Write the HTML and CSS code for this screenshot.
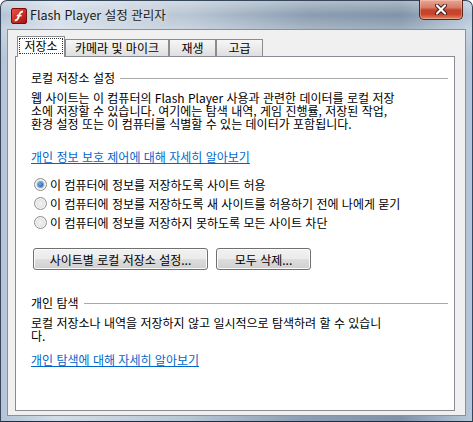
FILE: index.html
```html
<!DOCTYPE html>
<html lang="ko">
<head>
    <meta charset="UTF-8">
    <meta name="viewport" content="width=device-width, initial-scale=1.0">
    <title>Flash Player 설정 관리자</title>
    <link rel="stylesheet" href="styles.css">
</head>
<body>

<div class="window">
    <div class="titlebar">
        <svg class="app-icon" width="16" height="16" viewBox="0 0 16 16">
            <defs>
                <linearGradient id="flashBg" x1="0" y1="0" x2="1" y2="1">
                    <stop offset="0" stop-color="#f05545"/>
                    <stop offset="1" stop-color="#a30d0d"/>
                </linearGradient>
            </defs>
            <rect x="0.5" y="0.5" width="15" height="15" rx="1.5" fill="url(#flashBg)" stroke="#7a0a0a"/>
            <path d="M12 3.6 C9 3.4 8.4 5.6 7.9 8 C7.4 10.5 6.8 12.4 3.8 12.4" fill="none" stroke="#fff" stroke-width="1.8"/>
            <path d="M5.8 7.6 H10.6" stroke="#fff" stroke-width="1.6"/>
        </svg>
        <span class="title">Flash Player 설정 관리자</span>
        <div class="close-btn">
            <svg width="14" height="11" viewBox="0 0 14 11">
                <path d="M3 1.5 L11 9.5 M11 1.5 L3 9.5" stroke="#4a1a12" stroke-width="4" stroke-linecap="round"/>
                <path d="M3 1.5 L11 9.5 M11 1.5 L3 9.5" stroke="#fff" stroke-width="2.2" stroke-linecap="round"/>
            </svg>
        </div>
    </div>

    <div class="client">
        <div class="tabs">
            <div class="tab active"><span class="focus">저장소</span></div>
            <div class="tab tab-camera">카메라 및 마이크</div>
            <div class="tab tab-small">재생</div>
            <div class="tab tab-small">고급</div>
        </div>

        <div class="panel">
            <div class="group-title">로컬 저장소 설정</div>
            <p class="desc">웹 사이트는 이 컴퓨터의 Flash Player 사용과 관련한 데이터를 로컬 저장<br>소에 저장할 수 있습니다. 여기에는 탐색 내역, 게임 진행률, 저장된 작업,<br>환경 설정 또는 이 컴퓨터를 식별할 수 있는 데이터가 포함됩니다.</p>
            <a class="link link-privacy" href="#">개인 정보 보호 제어에 대해 자세히 알아보기</a>

            <div class="radios">
                <div class="radio-row"><span class="radio checked"></span>이 컴퓨터에 정보를 저장하도록 사이트 허용</div>
                <div class="radio-row"><span class="radio"></span>이 컴퓨터에 정보를 저장하도록 새 사이트를 허용하기 전에 나에게 묻기</div>
                <div class="radio-row"><span class="radio"></span>이 컴퓨터에 정보를 저장하지 못하도록 모든 사이트 차단</div>
            </div>

            <div class="buttons">
                <button class="btn btn-sites">사이트별 로컬 저장소 설정...</button>
                <button class="btn btn-delete">모두 삭제...</button>
            </div>

            <div class="group-title group-private">개인 탐색</div>
            <p class="desc">로컬 저장소나 내역을 저장하지 않고 일시적으로 탐색하려 할 수 있습니<br>다.</p>
            <a class="link link-private" href="#">개인 탐색에 대해 자세히 알아보기</a>
        </div>
    </div>
</div>

</body>
</html>
```

FILE: styles.css
```css
body {
    margin: 0;
    padding: 0;
    font-family: "Noto Sans CJK KR", sans-serif;
    font-size: 12px;
    color: #000;
    background-color: #fff;
}

.window {
    width: 473px;
    height: 422px;
    box-sizing: border-box;
    display: flex;
    flex-direction: column;
    padding: 0 6px 5px 6px;
    border: 1px solid #37475b;
    border-bottom-color: #1f2e44;
    border-radius: 7px 7px 0 0;
    background:
        linear-gradient(180deg, rgba(255, 255, 255, 0.35) 0, rgba(255, 255, 255, 0) 14px, rgba(255, 255, 255, 0.25) 28px, rgba(255, 255, 255, 0) 60px),
        linear-gradient(90deg, #b3c4d6 0%, #d2dce7 12%, #b7c5d4 40%, #8b9db1 65%, #7f93a8 85%, #b6c7d9 100%);
}

/* title bar */
.titlebar {
    height: 28px;
    display: flex;
    align-items: flex-start;
    padding-left: 4px;
}

.app-icon {
    margin-top: 7px;
    flex-shrink: 0;
}

.title {
    margin-left: 3px;
    margin-top: 6px;
    line-height: 16px;
    font-size: 12.5px;
    color: #1a1a1a;
    text-shadow: 0 0 6px rgba(255, 255, 255, 0.9);
}

.close-btn {
    margin-left: auto;
    margin-right: 3px;
    margin-top: -1px;
    width: 44px;
    height: 20px;
    box-sizing: border-box;
    border: 1px solid #5a2218;
    border-top: none;
    border-radius: 0 0 5px 5px;
    background: linear-gradient(180deg, #e9a797 0%, #d77b66 40%, #c2452d 52%, #c8432a 75%, #e28763 100%);
    box-shadow: inset 0 0 0 1px rgba(255, 220, 200, 0.35);
    display: flex;
    align-items: center;
    justify-content: center;
}

/* client area */
.client {
    flex: 1;
    display: flex;
    flex-direction: column;
    background-color: #f0f0f0;
    border: 1px solid #8193a8;
    padding: 6px 10px 4px 7px;
}

.tabs {
    display: flex;
    align-items: flex-end;
    height: 20px;
    padding-left: 2px;
}

.tab {
    box-sizing: border-box;
    height: 17px;
    line-height: 16px;
    text-align: center;
    border: 1px solid #898c95;
    border-bottom: none;
    background: linear-gradient(180deg, #f6f6f6 0%, #ebebeb 50%, #dedede 100%);
    white-space: nowrap;
}

.tab.active {
    position: relative;
    z-index: 1;
    width: 48px;
    height: 21px;
    margin-bottom: -1px;
    padding: 1px 1px 3px 1px;
    background: #fff;
}

.tab .focus {
    display: block;
    line-height: 14px;
    height: 16px;
    box-sizing: border-box;
    border: 1px dotted #333;
}

.tab-camera {
    width: 104px;
}

.tab-small {
    width: 47px;
}

.panel {
    flex: 1;
    background-color: #fff;
    border: 1px solid #898c95;
    padding: 14px 6px 0 15px;
}

.group-title {
    display: flex;
    align-items: center;
    line-height: 14px;
    white-space: nowrap;
}

.group-title::after {
    content: "";
    flex: 1;
    height: 1px;
    margin-left: 5px;
    margin-top: 1px;
    background-color: #a9a9a9;
}

.group-private {
    margin-top: 26px;
}

.desc {
    margin: 6px 0 0 0;
    line-height: 13px;
    white-space: nowrap;
}

.link {
    display: inline-block;
    color: #0066cc;
    text-decoration: underline;
    line-height: 14px;
}

.link-privacy {
    margin-top: 20px;
}

.link-private {
    margin-top: 11px;
}

.radios {
    margin-top: 10px;
    margin-left: 3px;
}

.radio-row {
    display: flex;
    align-items: center;
    height: 19px;
    white-space: nowrap;
}

.radio {
    width: 13px;
    height: 13px;
    box-sizing: border-box;
    margin-right: 3px;
    border: 1px solid #8f8f8f;
    border-radius: 50%;
    background: radial-gradient(circle at 50% 50%, #f4f4f4 0, #e3e3e3 55%, #cfcfcf 100%);
    box-shadow: inset 0 0 0 1px #f8f8f8;
    display: flex;
    align-items: center;
    justify-content: center;
}

.radio.checked::after {
    content: "";
    width: 5px;
    height: 5px;
    border-radius: 50%;
    background: radial-gradient(circle at 40% 40%, #6db6f3 0, #2a6fc0 60%, #134a8c 100%);
    box-shadow: 0 0 0 1px #7aa4cf;
}

.buttons {
    display: flex;
    gap: 8px;
    margin-top: 16px;
    margin-left: 2px;
}

.btn {
    height: 22px;
    box-sizing: border-box;
    padding: 0;
    font-family: "Noto Sans CJK KR", sans-serif;
    font-size: 12px;
    line-height: 19px;
    color: #000;
    border: 1px solid #707070;
    border-radius: 3px;
    background: linear-gradient(180deg, #f2f2f2 0%, #ebebeb 48%, #dddddd 52%, #cfcfcf 100%);
    box-shadow: inset 0 0 0 1px #fbfbfb;
    white-space: nowrap;
}

.btn-sites {
    width: 175px;
}

.btn-delete {
    width: 95px;
}
```
